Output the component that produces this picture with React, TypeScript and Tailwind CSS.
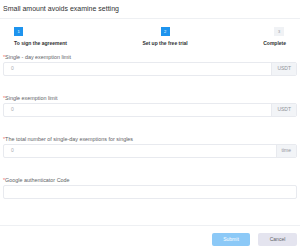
import React from "react";

function Field({ label, value, addon }: { label: string; value?: string; addon?: string }) {
  return (
    <div className="flex flex-col">
      <div className="h-[6px] leading-[6px] text-[5.4px] text-[#606266] whitespace-nowrap">
        <span className="text-[#f56c6c]">*</span>
        {label}
      </div>
      <div className="mt-[2px] flex h-[14px] rounded-[2px] border border-[#e8eaef] overflow-hidden">
        <div className="flex-1 flex items-center pl-[7px] text-[5px] text-[#a8abb2]">{value}</div>
        {addon && (
          <div className="flex items-center px-[5px] bg-[#f2f4f7] border-l border-[#e8eaef] text-[5px] text-[#909399]">
            {addon}
          </div>
        )}
      </div>
    </div>
  );
}

export default function App() {
  return (
    <div
      className="w-[300px] h-[250px] bg-white flex flex-col overflow-hidden"
      style={{ fontFamily: '"Liberation Sans", Arial, sans-serif' }}
    >
      <div className="h-[19px] px-[3px] flex items-center text-[7px] text-[#303133] border-b border-[#eef0f3]">
        Small amount avoids examine setting
      </div>
      <div className="pt-[8px] px-[14px] flex justify-between">
        <div className="flex flex-col items-start">
          <div className="w-[9px] h-[9px] bg-[#1e94ee] text-white text-[4px] flex items-center justify-center">1</div>
          <div className="mt-[4px] text-[5px] leading-[7px] font-bold text-[#303133]">To sign the agreement</div>
        </div>
        <div className="flex flex-col items-center">
          <div className="w-[9px] h-[9px] bg-[#1e94ee] text-white text-[4px] flex items-center justify-center">2</div>
          <div className="mt-[4px] text-[5px] leading-[7px] font-bold text-[#303133]">Set up the free trial</div>
        </div>
        <div className="flex flex-col items-end">
          <div className="w-[10px] h-[9px] mr-[2px] bg-[#f0f2f5] text-[#909399] text-[4px] flex items-center justify-center">3</div>
          <div className="mt-[4px] text-[5px] leading-[7px] font-bold text-[#303133]">Complete</div>
        </div>
      </div>
      <div className="mt-[7px] px-[3px] flex flex-col gap-[19px]">
        <Field label="Single - day exemption limit" value="0" addon="USDT" />
        <Field label="Single exemption limit" value="0" addon="USDT" />
        <Field label="The total number of single-day exemptions for singles" value="0" addon="time" />
        <Field label="Google authenticator Code" />
      </div>
      <div className="flex-1" />
      <div className="h-[25px] border-t border-[#eef0f3] flex items-start justify-end gap-[8px] pt-[7px] pr-[3px]">
        <div className="w-[38px] h-[13px] rounded-[2px] bg-[#8cc9f7] text-white text-[5px] flex items-center justify-center">Submit</div>
        <div className="w-[39px] h-[13px] rounded-[2px] bg-[#e4e4ef] text-[#606266] text-[5px] flex items-center justify-center">Cancel</div>
      </div>
    </div>
  );
}
